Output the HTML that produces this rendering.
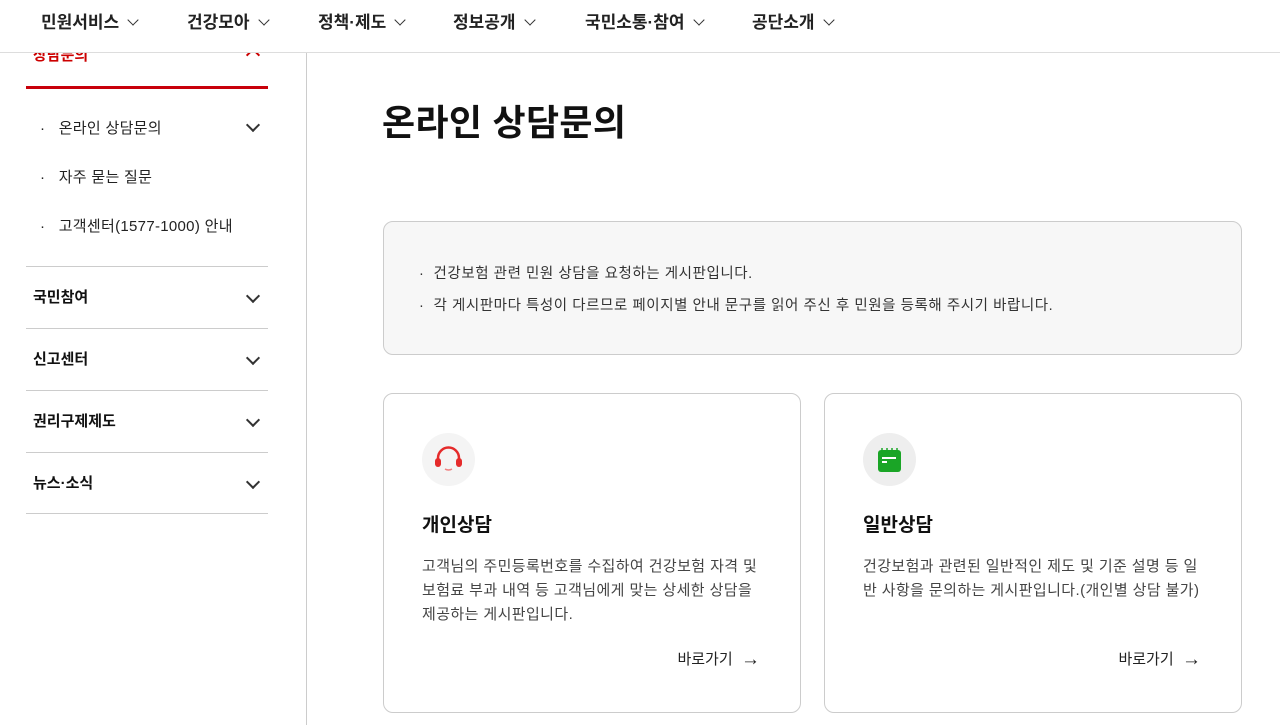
<!DOCTYPE html>
<html><head><meta charset="utf-8"><style>
*{box-sizing:border-box;margin:0;padding:0}
body{width:1280px;height:725px;overflow:hidden;background:#fff;font-family:"Liberation Sans","Noto Sans CJK KR",sans-serif;color:#111;position:relative}
.hdr{position:absolute;left:0;top:0;width:1280px;height:53px;border-bottom:1px solid #ddd;background:#fff;z-index:2}
.nav{position:absolute;top:8px;font-size:17px;font-weight:bold;color:#222;white-space:nowrap}
.chev{display:inline-block;width:8px;height:8px;border-right:1.6px solid #333;border-bottom:1.6px solid #333;transform:rotate(45deg);margin-left:10px;position:relative;top:-4px}
.side{position:absolute;left:26px;width:242px}
.vline{position:absolute;left:306px;top:53px;width:1px;height:672px;background:#ccc}
.sub{position:absolute;left:40px;font-size:15px;color:#222;letter-spacing:0.3px}
.sec{position:absolute;left:26px;width:242px;height:62px;border-top:1px solid #ccc;font-size:15px;font-weight:bold;padding:19px 0 0 7px}
.dchev{position:absolute;right:10px;width:10px;height:10px;border-right:2px solid #333;border-bottom:2px solid #333;transform:rotate(45deg)}
.box{position:absolute;left:383px;top:221px;width:859px;height:134px;background:#f7f7f7;border:1px solid #ccc;border-radius:10px;font-size:14.5px;letter-spacing:0.55px;color:#333;padding:36px 0 0 35px;line-height:32px}
.card{position:absolute;top:393px;width:418px;height:320px;border:1px solid #ccc;border-radius:10px;padding:39px 0 0 38px}
.ic{width:53px;height:53px;border-radius:50%;background:#f4f4f4;position:relative}
.card h3{font-size:19px;margin-top:24px;font-weight:bold}
.card p{font-size:15px;color:#444;line-height:24px;margin-top:18px;width:345px;letter-spacing:0.4px}
.go{position:absolute;right:40px;bottom:42px;font-size:15px;color:#222}
.go b{font-weight:normal;font-size:19px;position:relative;top:1px}
</style></head><body>
<div class="hdr">
<div class="nav" style="left:41px">민원서비스<span class="chev"></span></div>
<div class="nav" style="left:187px">건강모아<span class="chev"></span></div>
<div class="nav" style="left:318px">정책·제도<span class="chev"></span></div>
<div class="nav" style="left:453px">정보공개<span class="chev"></span></div>
<div class="nav" style="left:585px">국민소통·참여<span class="chev"></span></div>
<div class="nav" style="left:752px">공단소개<span class="chev"></span></div>
</div>
<div style="position:absolute;left:33px;top:44px;font-size:15px;font-weight:bold;color:#c00">상담문의</div>
<div style="position:absolute;left:248px;top:50px;width:10px;height:10px;border-left:2px solid #c00;border-top:2px solid #c00;transform:rotate(45deg)"></div>
<div class="side" style="top:86px;height:3px;background:#c8000a"></div>
<div class="vline"></div>
<div class="sub" style="top:117px">·&nbsp;&nbsp; 온라인 상담문의</div>
<div class="dchev" style="left:248px;top:120px"></div>
<div class="sub" style="top:166px">·&nbsp;&nbsp; 자주 묻는 질문</div>
<div class="sub" style="top:215px">·&nbsp;&nbsp; 고객센터(1577-1000) 안내</div>
<div class="sec" style="top:266px">국민참여<span class="dchev" style="top:24px"></span></div>
<div class="sec" style="top:328px">신고센터<span class="dchev" style="top:24px"></span></div>
<div class="sec" style="top:390px">권리구제제도<span class="dchev" style="top:24px"></span></div>
<div class="sec" style="top:452px;border-bottom:1px solid #ccc">뉴스·소식<span class="dchev" style="top:24px"></span></div>
<div style="position:absolute;left:382px;top:94px;font-size:36px;font-weight:bold;color:#111;letter-spacing:0.3px">온라인 상담문의</div>
<div class="box">·&nbsp; 건강보험 관련 민원 상담을 요청하는 게시판입니다.<br>·&nbsp; 각 게시판마다 특성이 다르므로 페이지별 안내 문구를 읽어 주신 후 민원을 등록해 주시기 바랍니다.</div>
<div class="card" style="left:383px">
<div class="ic"><svg width="53" height="53" viewBox="0 0 53 53"><path d="M16 28v-3a10.5 10.5 0 0 1 21 0v3" fill="none" stroke="#e52b2b" stroke-width="2.5"/><rect x="13" y="25" width="6" height="9" rx="3" fill="#e52b2b"/><rect x="34" y="25" width="6" height="9" rx="3" fill="#e52b2b"/><path d="M23 36q3.5 2 7 0" fill="none" stroke="#f08080" stroke-width="1.5"/></svg></div>
<h3>개인상담</h3>
<p>고객님의 주민등록번호를 수집하여 건강보험 자격 및 보험료 부과 내역 등 고객님에게 맞는 상세한 상담을 제공하는 게시판입니다.</p>
<div class="go">바로가기 &nbsp;<b>→</b></div>
</div>
<div class="card" style="left:824px">
<div class="ic" style="background:#eee"><svg width="53" height="53" viewBox="0 0 53 53"><rect x="15" y="17" width="23" height="22" rx="3" fill="#1aa526"/><path d="M19 15v3M24 15v3M29 15v3M34 15v3" stroke="#1aa526" stroke-width="1.5"/><path d="M19 25h14M19 29h5" stroke="#fff" stroke-width="2"/></svg></div>
<h3>일반상담</h3>
<p>건강보험과 관련된 일반적인 제도 및 기준 설명 등 일반 사항을 문의하는 게시판입니다.(개인별 상담 불가)</p>
<div class="go">바로가기 &nbsp;<b>→</b></div>
</div>
</body></html>
